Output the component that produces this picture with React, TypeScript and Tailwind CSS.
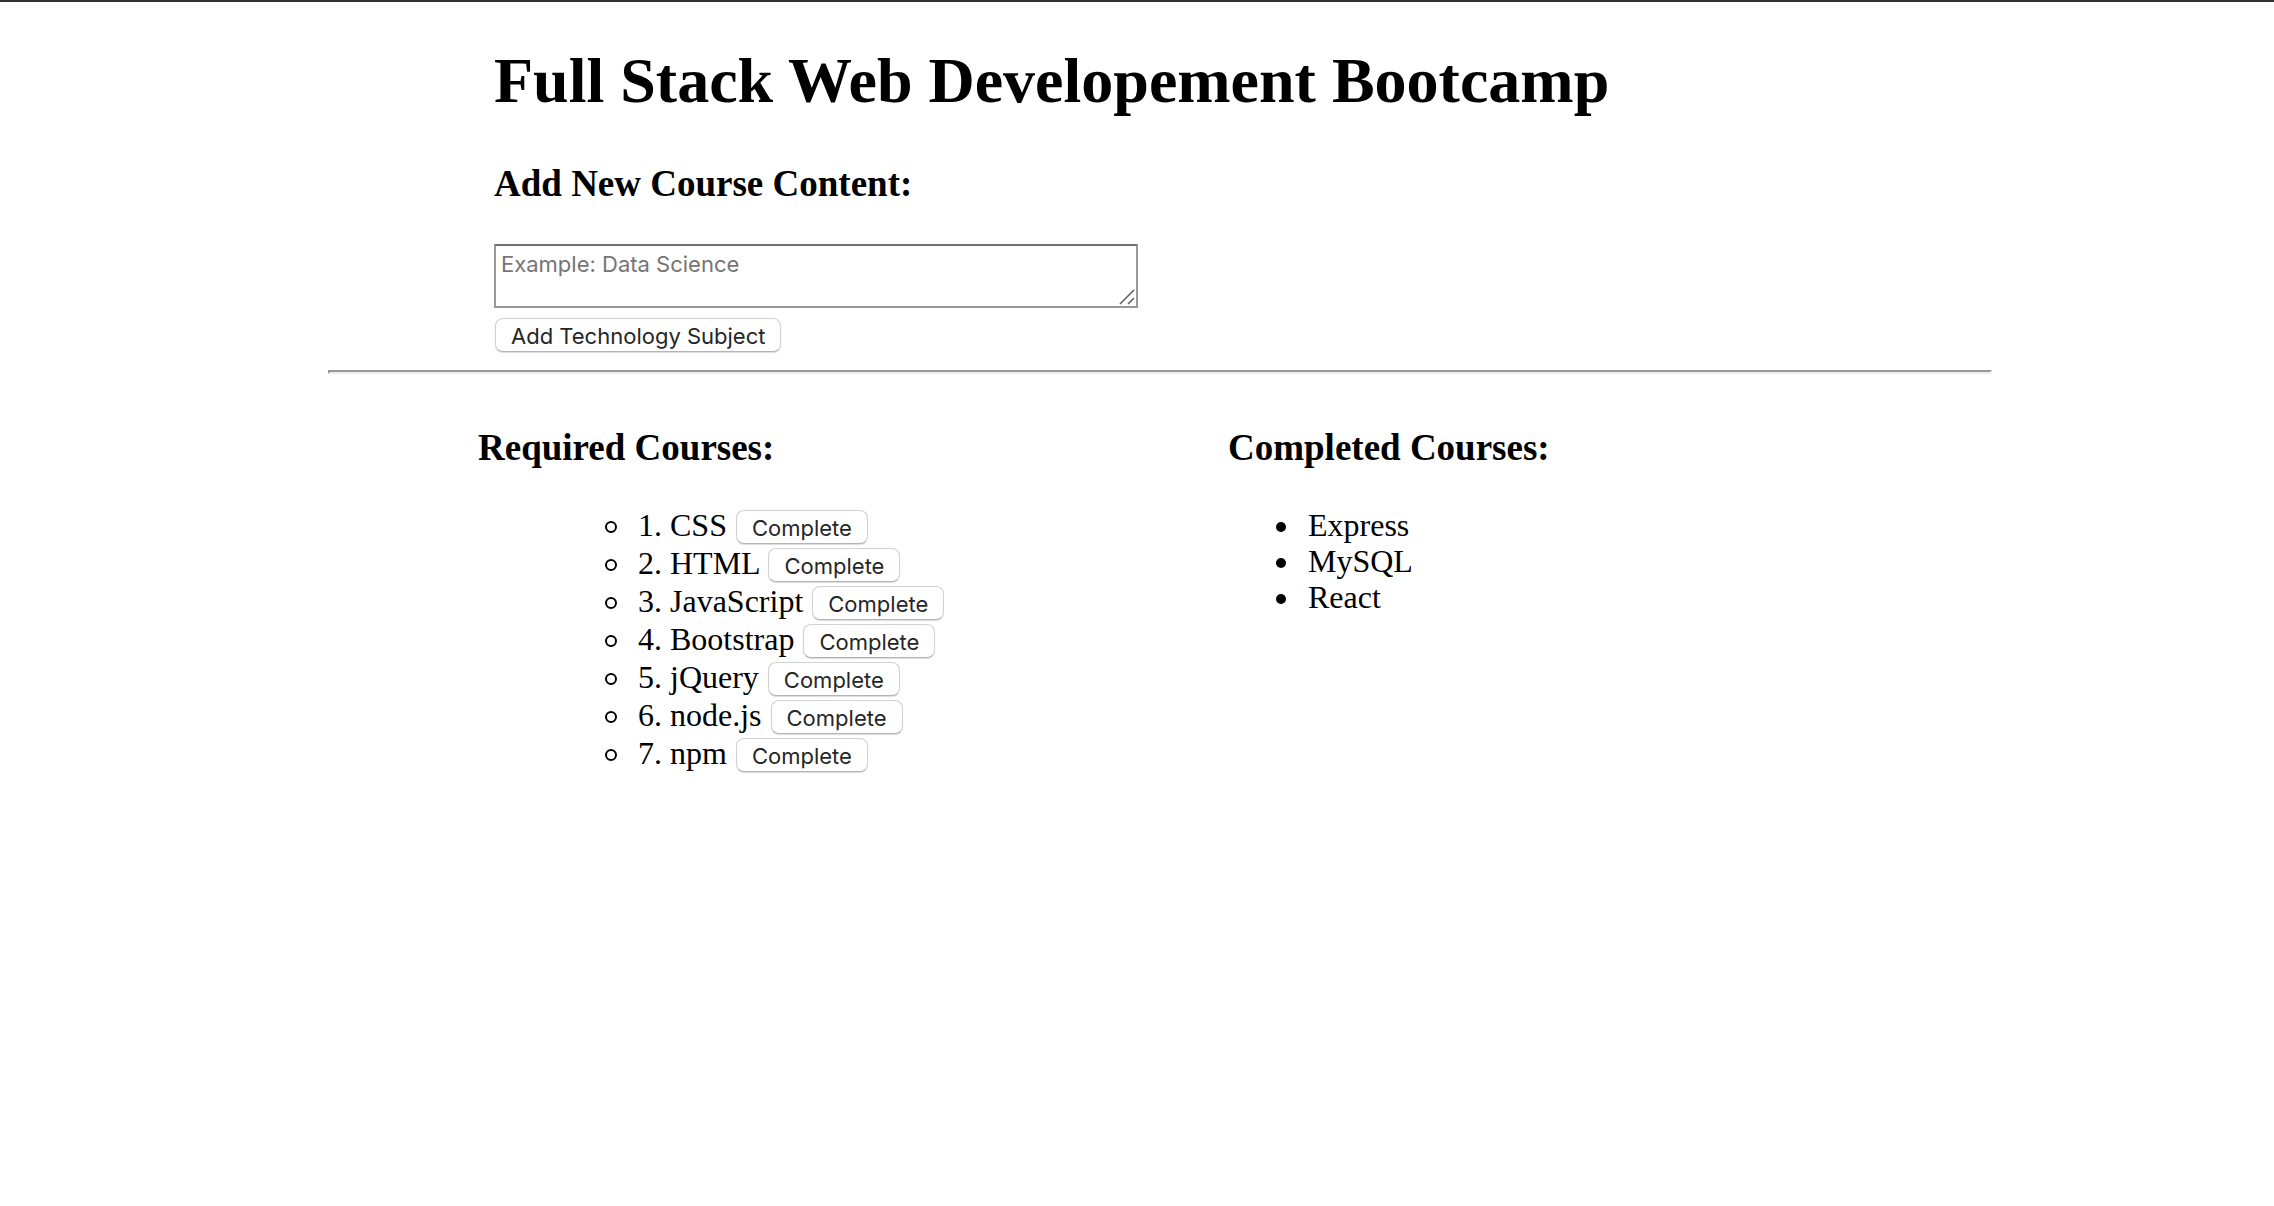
import { useState } from "react";
import type { FormEvent } from "react";

const buttonClass =
  "mx-px h-[34px] rounded-lg border border-[#d2d2d2] border-b-[#b4b4b4] bg-white px-[15px] pt-0.5 align-baseline font-['Inter',sans-serif] text-[22px] leading-[26px] text-[#262626] shadow-[0_1px_1px_rgba(0,0,0,0.14)]";

const headingClass = "text-[37px] leading-[44px] font-bold";

export default function App() {
  const [required, setRequired] = useState([
    "CSS",
    "HTML",
    "JavaScript",
    "Bootstrap",
    "jQuery",
    "node.js",
    "npm",
  ]);
  const [completed, setCompleted] = useState(["Express", "MySQL", "React"]);
  const [subject, setSubject] = useState("");

  const addSubject = (event: FormEvent) => {
    event.preventDefault();
    if (!subject.trim()) return;
    setRequired([...required, subject.trim()]);
    setSubject("");
  };

  const complete = (name: string) => {
    setRequired(required.filter((course) => course !== name));
    setCompleted([...completed, name]);
  };

  return (
    <div className="min-h-screen border-t-2 border-[#2f2f31] bg-white pt-[42px] pr-[282px] pl-[328px] font-['Liberation_Serif',serif] text-[32px] text-black">
      <header className="pl-[166px]">
        <h1 className="text-[64px] leading-[74px] font-bold">
          Full Stack Web Developement Bootcamp
        </h1>
        <form onSubmit={addSubject} className="mt-11">
          <h2 className={headingClass}>
            <label htmlFor="subject">Add New Course Content:</label>
          </h2>
          <div className="relative mt-[38px] w-[644px]">
            <textarea
              id="subject"
              value={subject}
              onChange={(event) => setSubject(event.target.value)}
              placeholder="Example: Data Science"
              className="block h-16 w-full resize-none border-2 border-[#999] border-t-[#6f6f6f] bg-white px-[5px] py-1 font-['Inter',sans-serif] text-[22px] leading-[28px] text-black placeholder:text-[#757575]"
            />
            <svg
              className="pointer-events-none absolute right-[3px] bottom-[3px]"
              width="16"
              height="16"
              viewBox="0 0 16 16"
              fill="none"
              stroke="#5c5c5c"
              strokeWidth="1.5"
              aria-hidden="true"
            >
              <path d="M1 15 15 1M9 15l6-6" />
            </svg>
          </div>
          <button type="submit" className={`mt-2.5 block ${buttonClass}`}>
            Add Technology Subject
          </button>
        </form>
      </header>

      <hr className="mt-[18px] h-1 border-2 border-[#999] border-r-[#eee] border-b-[#eee]" />

      <main className="mt-[52px] grid grid-cols-2 pr-3.5 pl-[150px]">
        <section>
          <h2 className={headingClass}>Required Courses:</h2>
          <ul className="mt-9 pl-[127px] leading-[38px]">
            {required.map((name, index) => (
              <li
                key={name}
                className="before:mr-[21px] before:inline-block before:size-3 before:rounded-full before:border-2 before:border-black before:align-[3px] before:content-['']"
              >
                {index + 1}. {name}{" "}
                <button
                  type="button"
                  onClick={() => complete(name)}
                  className={buttonClass}
                >
                  Complete
                </button>
              </li>
            ))}
          </ul>
        </section>
        <section>
          <h2 className={headingClass}>Completed Courses:</h2>
          <ul className="mt-[37px] list-disc pl-[74px] leading-[36px]">
            {completed.map((name) => (
              <li key={name} className="pl-1.5">
                {name}
              </li>
            ))}
          </ul>
        </section>
      </main>
    </div>
  );
}
